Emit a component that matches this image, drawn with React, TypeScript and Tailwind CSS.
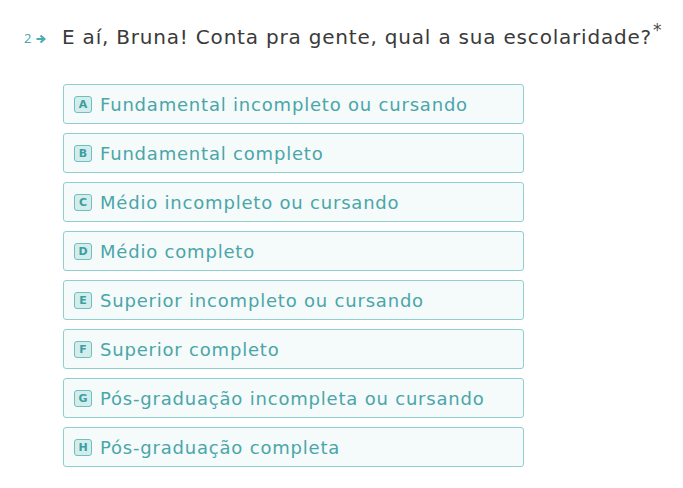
const options = [
  { key: 'A', label: 'Fundamental incompleto ou cursando' },
  { key: 'B', label: 'Fundamental completo' },
  { key: 'C', label: 'Médio incompleto ou cursando' },
  { key: 'D', label: 'Médio completo' },
  { key: 'E', label: 'Superior incompleto ou cursando' },
  { key: 'F', label: 'Superior completo' },
  { key: 'G', label: 'Pós-graduação incompleta ou cursando' },
  { key: 'H', label: 'Pós-graduação completa' },
];

export default function App() {
  return (
    <div className="w-[683px] h-[488px] bg-white font-['DejaVu_Sans',sans-serif] overflow-hidden">
      {/* Question */}
      <div className="flex items-start pt-[22px]">
        <div className="flex items-center w-[62px] pl-[24px] pt-[10px] text-[#4aacac] font-['Noto_Sans',sans-serif]">
          <span className="text-[13px] leading-none">2</span>
          <svg width="10" height="10" viewBox="0 0 10 10" className="ml-[5px]">
            <path d="M0.5 5H7" stroke="currentColor" strokeWidth="2" />
            <path d="M4.5 1.5L8.5 5L4.5 8.5" fill="none" stroke="currentColor" strokeWidth="2" />
          </svg>
        </div>
        <h1 className="text-[20px] leading-[30px] h-[30px] text-[#3a3a3a] tracking-[0.8px]">
          E aí, Bruna! Conta pra gente, qual a sua escolaridade?
          <span className="relative -top-[8px] ml-[1px] text-[17px] leading-none text-[#4a4a4a] tracking-normal">*</span>
        </h1>
      </div>

      {/* Options */}
      <div className="flex flex-col gap-[9px] ml-[63px] mt-[32px] w-[461px]">
        {options.map((o) => (
          <div
            key={o.key}
            className="flex items-center h-[40px] rounded-[3px] border border-[#8fcfcf] bg-[#f5fafb] pl-[10px]"
          >
            <span className="flex items-center justify-center w-[18px] h-[17px] rounded-[3px] border border-[#6fbfbf] bg-[#d3eded] text-[11px] font-bold text-[#3d9e9f] leading-none">
              {o.key}
            </span>
            <span className="ml-[8px] text-[18px] text-[#4aa6a8] tracking-[0.8px]">{o.label}</span>
          </div>
        ))}
      </div>
    </div>
  );
}
